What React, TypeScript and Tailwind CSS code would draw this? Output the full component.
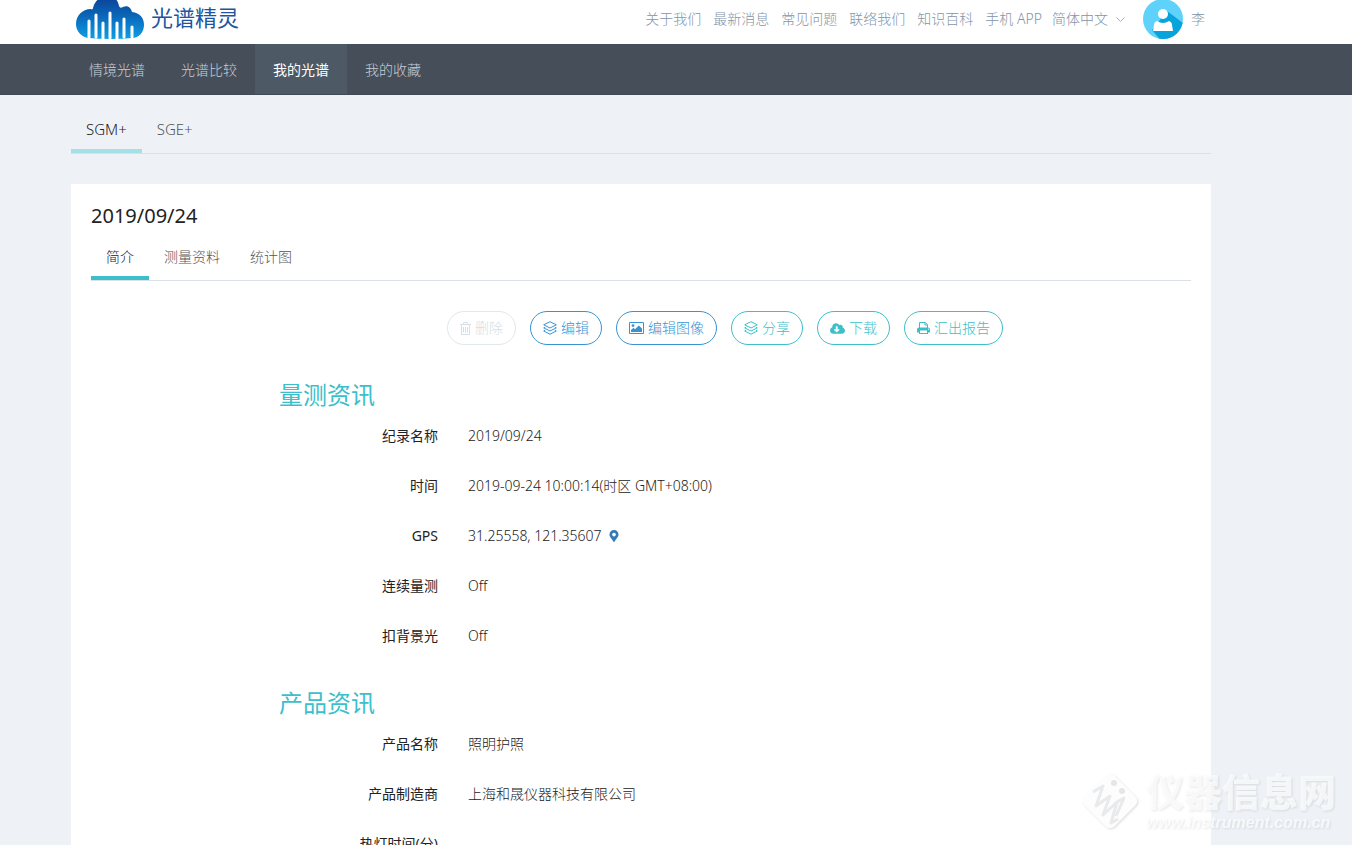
import { useState } from "react";
import { FaCloudDownloadAlt, FaMapMarkerAlt } from "react-icons/fa";
import clsx from "clsx";

const headerLinks = [
  "关于我们",
  "最新消息",
  "常见问题",
  "联络我们",
  "知识百科",
  "手机 APP",
];

const navItems = ["情境光谱", "光谱比较", "我的光谱", "我的收藏"];

const measureInfo = [
  { label: "纪录名称", value: "2019/09/24" },
  { label: "时间", value: "2019-09-24 10:00:14(时区 GMT+08:00)" },
  { label: "GPS", value: "31.25558, 121.35607", pin: true },
  { label: "连续量测", value: "Off" },
  { label: "扣背景光", value: "Off" },
];

const productInfo = [
  { label: "产品名称", value: "照明护照" },
  { label: "产品制造商", value: "上海和晟仪器科技有限公司" },
  { label: "热灯时间(分)", value: "" },
];

const Logo = () => (
  <svg width="70" height="44" viewBox="0 0 70 44" aria-hidden="true">
    <defs>
      <linearGradient id="cloud" x1="0" y1="0" x2="0" y2="1">
        <stop offset="0" stopColor="#0a3f97" />
        <stop offset="0.45" stopColor="#0a66b8" />
        <stop offset="1" stopColor="#0c9fe6" />
      </linearGradient>
    </defs>
    <path
      d="M14 38C6 37 1 31 1 24C1 16 7 9 16 9C17 10 18 9 18 8C20 0 26-4 33-4C39-4 43 0 44 6C45 8 46 8 48 7C53 5 56 8 57 12C65 13 69 18 69 25C69 32 64 38 57 38Q36 40 14 38Z"
      fill="url(#cloud)"
    />
    <path
      d="M14 37V21M21 37V15M28 40V23M35 38V13M42 40V23M49 37V19M57 37V27"
      stroke="#fff"
      strokeWidth="3"
      strokeLinecap="round"
    />
  </svg>
);

const Avatar = () => (
  <svg width="40" height="40" viewBox="0 0 40 40" aria-hidden="true">
    <defs>
      <clipPath id="round">
        <circle cx="20" cy="20" r="20" />
      </clipPath>
    </defs>
    <g clipPath="url(#round)">
      <rect width="40" height="40" fill="#5fd2fb" />
      <path d="M24 12L44 27V44H20L9 31Z" fill="#07a3da" />
    </g>
    <circle cx="20" cy="15" r="5" fill="#fff" />
    <path d="M14 22Q20 26 26 22Q29 23 29 26L30 32H10L11 26Q11 23 14 22Z" fill="#fff" />
  </svg>
);

const TrashIcon = () => (
  <svg width="11" height="13" viewBox="0 0 11 13" fill="none" stroke="currentColor" aria-hidden="true">
    <path d="M0 2.5H11M3.5 2.5V.5H7.5V2.5M1.5 2.5V12.5H9.5V2.5M3.5 5V10.5M5.5 5V10.5M7.5 5V10.5" />
  </svg>
);

const LayersIcon = () => (
  <svg width="14" height="14" viewBox="0 0 14 14" fill="none" stroke="currentColor" strokeLinejoin="round" aria-hidden="true">
    <path d="M7 .7L13.3 3.8L7 7L.7 3.8ZM2.2 6.1L.7 6.9L7 10L13.3 6.9L11.8 6.1M2.2 9.2L.7 10L7 13.2L13.3 10L11.8 9.2" />
  </svg>
);

const PictureIcon = () => (
  <svg width="15" height="12" viewBox="0 0 15 12" aria-hidden="true">
    <path d="M.5.5H14.5V11.5H.5Z" fill="none" stroke="currentColor" />
    <circle cx="4" cy="3.6" r="1.4" fill="currentColor" />
    <path d="M2 10V8L4.5 5.7L6 7.2L9.8 3.6L13 6.6V10Z" fill="currentColor" />
  </svg>
);

const PrintIcon = () => (
  <svg width="13" height="12" viewBox="0 0 13 12" aria-hidden="true">
    <path d="M2.5 6V.5H8.5L10.5 2.5V6M8 .5V3H10.5" fill="none" stroke="currentColor" />
    <path
      d="M2 5.5H11Q13 5.5 13 7.5V10.5H11V12H2V10.5H0V7.5Q0 5.5 2 5.5ZM3 8.5V11H10V8.5ZM11 6.7V7.7H12V6.7Z"
      fill="currentColor"
      fillRule="evenodd"
    />
  </svg>
);

const actions = [
  { text: "删除", icon: <TrashIcon />, style: "border-[#e1e8eb] text-[#d6e0e6]", disabled: true },
  { text: "编辑", icon: <LayersIcon />, style: "border-[#3993d2] text-[#3993d2]" },
  { text: "编辑图像", icon: <PictureIcon />, style: "border-[#3993d2] text-[#3993d2]" },
  { text: "分享", icon: <LayersIcon />, style: "border-[#3cbfcb] text-[#3cbfcb]" },
  { text: "下载", icon: <FaCloudDownloadAlt size={15} />, style: "border-[#3cbfcb] text-[#3cbfcb]" },
  { text: "汇出报告", icon: <PrintIcon />, style: "border-[#3cbfcb] text-[#3cbfcb]" },
];

type TabsProps = {
  items: string[];
  className: string;
  activeClass: string;
};

const Tabs = ({ items, className, activeClass }: TabsProps) => {
  const [active, setActive] = useState(0);

  return (
    <div role="tablist" className={clsx("flex border-b border-[#dae0e5]", className)}>
      {items.map((item, i) => (
        <button
          key={item}
          role="tab"
          aria-selected={i === active}
          onClick={() => setActive(i)}
          className={clsx(
            "border-b-4 px-[15px] font-light cursor-pointer",
            i === active ? activeClass : "border-transparent text-[#555]"
          )}
        >
          {item}
        </button>
      ))}
    </div>
  );
};

type InfoProps = {
  title: string;
  rows: { label: string; value: string; pin?: boolean }[];
};

const InfoSection = ({ title, rows }: InfoProps) => (
  <section className="mb-[26px] pl-[188px]">
    <h3 className="text-2xl leading-8 text-[#3cbfcb]">{title}</h3>
    <dl>
      {rows.map((row) => (
        <div key={row.label} className="flex h-[50px] items-center gap-[30px]">
          <dt className="w-[159px] text-right text-[#222]">{row.label}</dt>
          <dd className="flex items-center gap-[6px] font-light text-[#222]">
            {row.value}
            {row.pin && (
              <a href="#map" aria-label="GPS" className="text-[#337ab7]">
                <FaMapMarkerAlt size={12} />
              </a>
            )}
          </dd>
        </div>
      ))}
    </dl>
  </section>
);

const Watermark = () => (
  <div className="pointer-events-none fixed right-4 bottom-3 flex items-center gap-1" aria-hidden="true">
    <svg width="64" height="64" viewBox="0 0 64 64" className="drop-shadow-[1px_1px_1px_#0002]">
      <rect x="11" y="11" width="42" height="42" rx="6" transform="rotate(45 32 32)" fill="#fdfdfe" />
      <g fill="none" stroke="#e8eaec" strokeWidth="3" strokeLinejoin="round">
        <path d="M15 23L25 17L18 37L32 27L25 46L39 33L33 54L40 50" />
        <path d="M39 33L46 29L38 47" />
      </g>
      <circle cx="36" cy="14" r="3" fill="#e4e6e8" />
      <circle cx="44" cy="22" r="3" fill="#e4e6e8" />
    </svg>
    <div className="text-white/70 drop-shadow-[1px_1px_1px_#0002]">
      <p className="mb-1 text-[38px] leading-10 font-black">仪器信息网</p>
      <p className="font-[Liberation_Sans] text-base leading-4 font-bold italic">
        www.instrument.com.cn
      </p>
    </div>
  </div>
);

const App = () => {
  const [nav, setNav] = useState(2);

  return (
    <div className="min-h-screen overflow-hidden bg-[#eef2f7] font-['Noto_Sans','Noto_Sans_CJK_SC',sans-serif] text-sm">
      <header className="flex h-11 items-start justify-between bg-white pr-[147px] pl-[75px]">
        <a href="#home" className="flex items-start gap-[6px]">
          <Logo />
          <span className="text-[22px] leading-[34px] text-[#1d55a0]">光谱精灵</span>
        </a>
        <div className="flex h-[38px] items-center font-light text-[#8494a8]">
          <nav className="flex gap-3">
            {headerLinks.map((link) => (
              <a key={link} href="#info">
                {link}
              </a>
            ))}
          </nav>
          <label className="ml-[10px] flex items-center gap-2">
            <select aria-label="语言" className="w-14 appearance-none bg-transparent outline-none">
              <option>简体中文</option>
            </select>
            <svg width="9" height="5" viewBox="0 0 9 5" fill="none" stroke="#a4b0bd" aria-hidden="true">
              <path d="M.5.5L4.5 4.5L8.5.5" />
            </svg>
          </label>
          <a href="#profile" className="ml-[18px] flex h-9 items-center gap-2">
            <Avatar />
            李
          </a>
        </div>
      </header>

      <nav className="flex h-[51px] border-b border-[#414954] bg-[#464e59] pl-[71px]">
        {navItems.map((item, i) => (
          <button
            key={item}
            onClick={() => setNav(i)}
            className={clsx(
              "cursor-pointer px-[18px] pt-[2px]",
              i === nav ? "bg-[#4d5965] text-white" : "font-light text-[#c8d0d8]"
            )}
          >
            {item}
          </button>
        ))}
      </nav>

      <div className="pr-[141px] pl-[71px]">
        <Tabs
          items={["SGM+", "SGE+"]}
          className="h-[59px] pt-4 text-[15px]"
          activeClass="border-[#a5e0e6] text-[#222]"
        />
        <main className="mt-[30px] bg-white px-5 pt-[18px]">
          <h2 className="text-[20px] leading-7 text-[#222]">2019/09/24</h2>
          <Tabs
            items={["简介", "测量资料", "统计图"]}
            className="h-[51px] pt-2"
            activeClass="border-[#3cbfcb] text-[#222]"
          />
          <div className="mt-[30px] mb-[34px] flex justify-center gap-[14px] pl-[168px]">
            {actions.map((action) => (
              <button
                key={action.text}
                disabled={action.disabled}
                className={clsx(
                  "flex h-[34px] items-center gap-1 rounded-full border px-3 font-light whitespace-nowrap",
                  action.style
                )}
              >
                {action.icon}
                {action.text}
              </button>
            ))}
          </div>
          <InfoSection title="量测资讯" rows={measureInfo} />
          <InfoSection title="产品资讯" rows={productInfo} />
        </main>
      </div>
      <Watermark />
    </div>
  );
};

export default App;
